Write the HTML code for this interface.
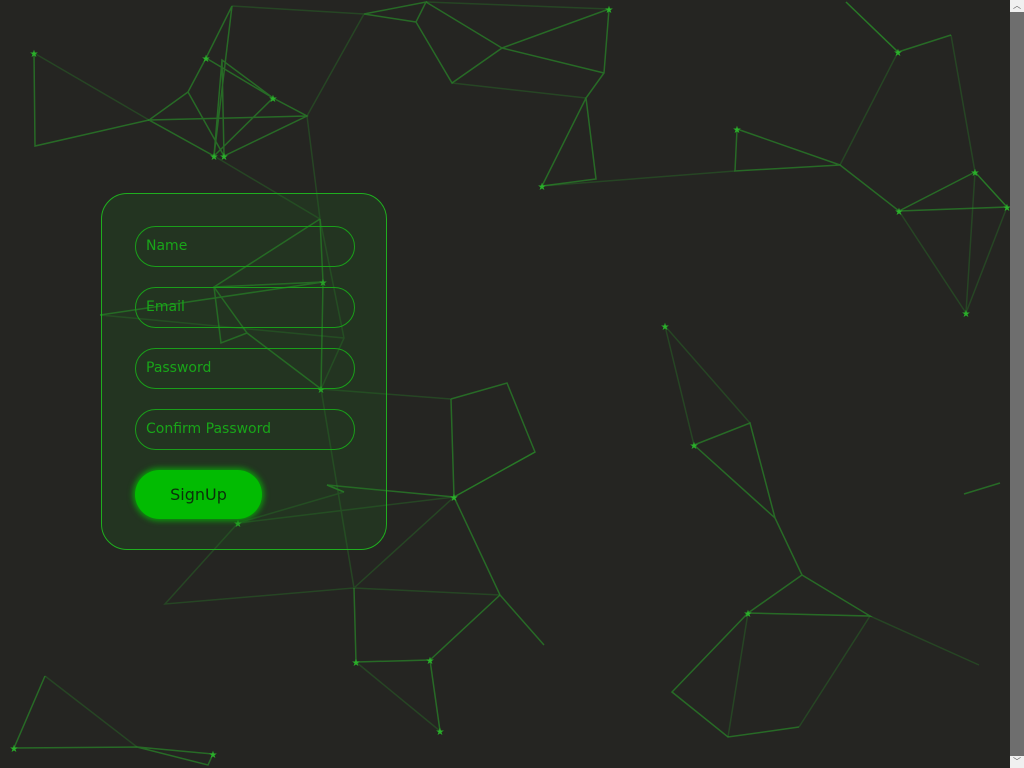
<!DOCTYPE html>
<html><head><meta charset="utf-8"><style>
html,body{margin:0;padding:0;width:1024px;height:768px;overflow:hidden;background:#252522;font-family:"DejaVu Sans","Liberation Sans",sans-serif}
svg.bg{position:absolute;left:0;top:0}
.card{position:absolute;left:101px;top:193px;width:286px;height:357px;border:1px solid #1fae1f;border-radius:26px;background:rgba(30,110,30,0.22);box-sizing:border-box}
.in{position:absolute;left:33px;width:220px;height:41px;border:1px solid #1a9e1a;border-radius:21px;box-sizing:border-box;color:#19a519;font-size:14px;line-height:39px;padding-left:10px}
.btn{position:absolute;left:33px;top:276px;width:127px;height:49px;border-radius:25px;background:#02bb02;box-shadow:0 0 6px 2px #0c9a0c;color:#0b300b;font-size:16px;text-align:center;line-height:49px}
.sb{position:absolute;left:1010px;top:0;width:14px;height:768px;background:#6e6e6e}
.sb .a{position:absolute;left:0;width:14px;height:12px;background:#f0f0f0;color:#555;font-size:8px;text-align:center;line-height:12px}
</style></head><body>
<svg class="bg" width="1010" height="768" stroke="#2a9a2a" fill="none" stroke-width="1.5">
<g stroke-opacity="0.6">
<path d="M232 6L206 58L188 92L149 120L214 156L222 60L273 98L307 116L224 156L188 92M206 58L273 98L214 156M149 120L307 116M222 60L224 156M232 6L214 156"/>
<path d="M364 14L426 2L416 22L452 83L502 48L426 2M416 22L364 14M502 48L609 9L604 73L586 98L596 179L542 186L586 98M502 48L604 73"/>
<path d="M34 53L35 146L149 120M737 129L735 171L840 165L899 211L975 172L1007 207L899 211M840 165L737 129M898 52L951 35M898 52L846 2"/>
<path d="M451 399L507 383L535 452L454 497L451 399M454 497L500 595L544 645M500 595L430 660L356 662L354 588M430 660L440 731M454 497L327 485L344 492"/>
<path d="M694 445L750 423L775 518L802 575L748 613L870 616L802 575M748 613L672 692L728 737L799 727M694 445L775 518M964 494L1000 483"/>
<path d="M45 676L14 748L137 747L208 765L213 754L137 747"/>
<path d="M320 219L323 282L214 287L221 343L247 333L214 287M100 315L323 282M323 282L321 389L247 333M320 219L214 287"/>
</g>
<g stroke-opacity="0.28">
<path d="M364 14L307 116L320 219L344 338L321 389L354 588L165 604L238 523L454 497M586 98L452 83M34 53L149 120M951 35L975 172L966 313L1007 207M899 211L966 313M665 326L694 445M665 326L750 423M870 616L979 665M870 616L799 727M748 613L728 737M321 389L451 399M100 315L344 338M454 497L535 452M238 523L344 492M344 492L327 485M354 588L454 497M356 662L440 731M500 595L354 588M846 2L898 52M542 186L735 171M214 156L320 219M840 165L898 52M975 172L1007 207M45 676L137 747M232 6L364 14M426 2L609 9"/>
</g>
<g fill="#2ab02a" stroke="none" font-size="10" text-anchor="middle">
<text x="34" y="57">★</text><text x="609" y="13">★</text><text x="542" y="190">★</text><text x="737" y="133">★</text><text x="899" y="215">★</text><text x="898" y="56">★</text><text x="975" y="176">★</text><text x="966" y="317">★</text><text x="1007" y="211">★</text><text x="665" y="330">★</text><text x="694" y="449">★</text><text x="748" y="617">★</text><text x="454" y="501">★</text><text x="356" y="666">★</text><text x="430" y="664">★</text><text x="440" y="735">★</text><text x="14" y="752">★</text><text x="213" y="758">★</text><text x="321" y="393">★</text><text x="323" y="286">★</text><text x="214" y="160">★</text><text x="224" y="160">★</text><text x="238" y="527">★</text><text x="206" y="62">★</text><text x="273" y="102">★</text>
</g>
</svg>
<div class="card">
<div class="in" style="top:32px">Name</div>
<div class="in" style="top:93px">Email</div>
<div class="in" style="top:154px">Password</div>
<div class="in" style="top:215px">Confirm Password</div>
<div class="btn">SignUp</div>
</div>
<div class="sb"><div class="a" style="top:0">︿</div><div class="a" style="bottom:0">﹀</div></div>
</body></html>
